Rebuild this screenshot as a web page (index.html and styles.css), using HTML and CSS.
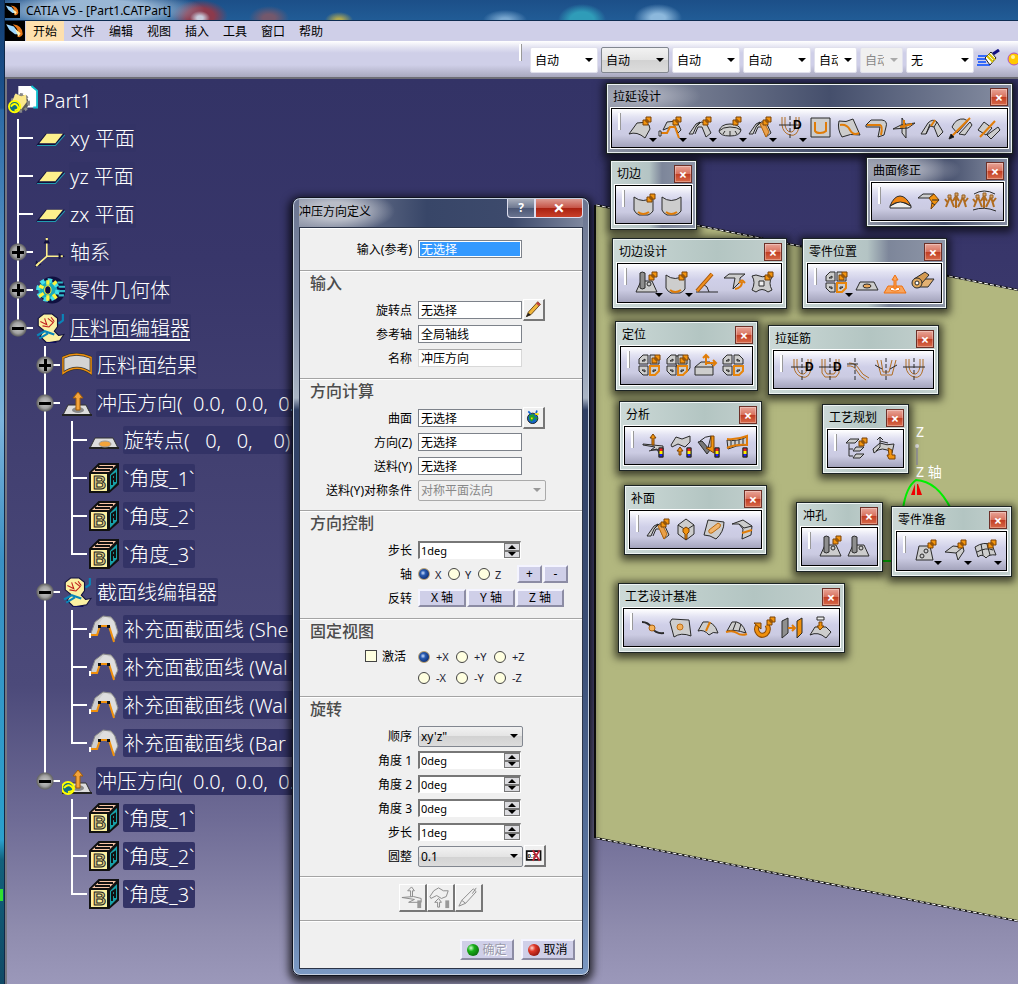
FILE: index.html
```html
<!DOCTYPE html>
<html lang="zh-CN">
<head>
  <meta charset="utf-8">
  <title>CATIA V5 - [Part1.CATPart]</title>
  <link rel="stylesheet" href="styles.css">
</head>

<body>
  <!-- icon library -->
  <svg class="library">
    <symbol id="logo" viewBox="0 0 18 18"><rect width="18" height="18" fill="#000"/><path d="M1 3L8 5L13 12L9 12L4 8Z" fill="#9fd8ff"/><path d="M7 3Q16 4 16 12Q14 16 11 14Q14 9 7 3Z" fill="#e8791a"/><path d="M9 7L14 11L12 14Z" fill="#fff1b0"/></symbol>
    <symbol id="brush" viewBox="0 0 24 20"><path d="M1 7H11M0 10H10M1 13H9M0 16H13" stroke="#0048ff" stroke-width="1.5"/><path d="M16 5L22 1" stroke="#101080" stroke-width="3"/><path d="M8 9L14 3L19 9L13 16Z" fill="#fff" stroke="#222"/><path d="M10 7L16 13M12 5L18 11" stroke="#d8c400" stroke-width="2"/></symbol>
    <symbol id="ball" viewBox="0 0 14 14"><circle cx="7" cy="7" r="6" fill="#ffc800" stroke="#b050c0"/><circle cx="6" cy="5" r="2" fill="#fff2a0"/></symbol>

    <!-- tree icons -->
    <symbol id="part" viewBox="0 0 32 32"><path d="M11 1H25L31 6V24H11Z" fill="#fff"/><path d="M25 1L31 6V24H27" fill="none" stroke="#10c0d0" stroke-width="2"/><circle cx="13" cy="19" r="9" fill="#5a5a58" stroke="#888" stroke-width="3" stroke-dasharray="3 3"/><path d="M5 16L8 9L14 12L19 10L20 18L14 26Z" fill="#fbe88a"/><circle cx="7" cy="23" r="6" fill="#107080" stroke="#ff0" stroke-width="2"/><path d="M3 23Q7 18 10 22T7 27" fill="none" stroke="#ff0" stroke-width="2"/></symbol>
    <symbol id="plane" viewBox="0 0 28 28"><path d="M1 21L10 10H28L19 21Z" fill="#10103c"/><path d="M4 19L11 10H26L19 19Z" fill="#fdf08c"/><path d="M2 21H19L28 11" fill="none" stroke="#209cb0"/></symbol>
    <symbol id="axes" viewBox="0 0 28 28"><path d="M11 4V18L3 25M11 18H25" fill="none" stroke="#fdf08c" stroke-width="1.5"/><path d="M11 0L8 6H14ZM28 18L22 15V21ZM0 28L1 22L6 26Z" fill="#10103c"/><path d="M10 2H12M24 18H26M1 27L4 24" stroke="#fdf08c" stroke-width="2"/></symbol>
    <symbol id="gear" viewBox="0 0 28 28"><circle cx="16" cy="14" r="11" fill="#101040" stroke="#101040" stroke-width="3"/><circle cx="12" cy="14" r="9" fill="#18aabd" stroke="#45e0e8" stroke-width="4" stroke-dasharray="4 3"/><path d="M12 5V9M12 19V24M4 10L8 12M4 20L8 17M17 9L20 6M17 18L20 22" stroke="#fdf43c" stroke-width="3"/><ellipse cx="12" cy="14" rx="3" ry="4" fill="#101040" stroke="#fdf43c"/><path d="M21 7H26M22 11H28M22 15H28M22 19H27" stroke="#30b8c8" stroke-width="2"/></symbol>
    <symbol id="editor" viewBox="0 0 28 28"><path d="M3 5L8 1H16L21 5V13L18 17L22 21L27 20L23 26L11 28L5 22L8 16L3 12Z" fill="#fbf0a2" stroke="#10103c"/><path d="M5 8L11 11L9 5M12 5L17 9L13 13L7 12M15 4L18 8" fill="none" stroke="#c02020"/><path d="M2 21L9 17L18 20M4 24L12 19M26 1V7L22 10" fill="none" stroke="#0a84b8" stroke-width="2"/><path d="M10 28H20" stroke="#101060" stroke-width="2"/></symbol>
    <symbol id="result" viewBox="0 0 32 28"><path d="M1 6Q15 -1 31 6V23Q16 12 1 23Z" fill="#d4d4d4" stroke="#333" stroke-width="3"/><path d="M1 23V6Q15 -1 31 6V23Q16 12 1 23Z" fill="none" stroke="#f0900c" stroke-width="1.5"/></symbol>
    <symbol id="punch" viewBox="0 0 30 28"><path d="M6 16H24L29 26H1Z" fill="#ddd" stroke="#333"/><path d="M0 26H30" stroke="#222" stroke-width="2"/><ellipse cx="16" cy="21" rx="6" ry="3" fill="#888"/><path d="M14 21V9H11L16 3L21 9H18V21Z" fill="#f3a43c" stroke="#a05a08"/></symbol>
    <symbol id="punch-update" viewBox="0 0 30 28"><use href="#punch"/><circle cx="6" cy="21" r="6" fill="#107080" stroke="#ff0" stroke-width="2"/><path d="M2 21Q6 16 10 20T6 25" fill="none" stroke="#ff0" stroke-width="2"/></symbol>
    <symbol id="plate" viewBox="0 0 30 28"><path d="M6 12H24L29 22H1Z" fill="#ddd" stroke="#333"/><path d="M0 22H30" stroke="#222" stroke-width="2"/><ellipse cx="16" cy="18" rx="6" ry="3" fill="#f3a43c" stroke="#999"/></symbol>
    <symbol id="cube" viewBox="0 0 30 30"><path d="M1 10L10 1H29V21L20 29H1Z" fill="#111" stroke="#111" stroke-width="2"/><path d="M3 9L11 2H27L20 9Z" fill="#f8c6a6"/><path d="M6 7H21M9 4H24" stroke="#111" stroke-width="2"/><path d="M21 12L28 5V20L21 27Z" fill="#18a0a8"/><path d="M23 22V13L26 11V19M23 17L26 15" fill="none" stroke="#111" stroke-width="2"/><rect x="2" y="11" width="16" height="17" fill="#fdf0a0"/><text x="4" y="26" class="cube-letter">B</text></symbol>
    <symbol id="fold" viewBox="0 0 30 30"><path d="M1 22L6 8L14 2L22 3L26 8L29 18L25 27L20 13L11 12L8 21Z" fill="#cfcfcf" stroke="#888"/><path d="M9 12Q12 5 16 3L24 6L28 18L25 24L19 12Z" fill="#dedede"/><path d="M2 21H8L11 12H20L25 28" fill="none" stroke="#f0900c" stroke-width="2"/><path d="M9 11H12V14H9ZM18 11H21V14H18Z" fill="#111"/><path d="M0 19H2V24H0Z" fill="#fff"/></symbol>

    <!-- toolbar icons -->
    <symbol id="dup" viewBox="0 0 26 26"><path class="o" d="M18 2H23V7H18ZM15 5H20V10H15Z"/></symbol>
    <symbol id="bar" viewBox="0 0 26 26"><rect x="18" y="15" width="4" height="9" fill="#22f"/><path stroke="none" fill="#e22" d="M18 15H22V18H18Z"/><path stroke="none" fill="#fe0" d="M18 18H22V21H18Z"/><path class="n" d="M18 15H22V24H18Z"/></symbol>
    <symbol id="sweep" viewBox="0 0 26 26"><path d="M1 19L9 8Q15 6 21 10L22 14L17 23Q9 16 1 19Z"/><use href="#dup"/></symbol>
    <symbol id="section" viewBox="0 0 26 26"><path d="M5 15L9 7L19 6L23 15L20 18L17 11L10 13Z"/><path class="ol" d="M3 18H9L12 12H17L21 23"/><path fill="#fff" d="M1 16H3V21H1Z"/><use href="#dup"/></symbol>
    <symbol id="wings" viewBox="0 0 26 26"><path d="M1 19L8 9L12 7L8 12L5 19ZM8 12L13 7L18 8L23 18L18 22L14 12L10 12L7 19"/><use href="#dup"/></symbol>
    <symbol id="bowl" viewBox="0 0 26 26"><path d="M1 16Q3 9 12 9T23 15Q22 21 12 21T1 16Z"/><path class="n" d="M1 16Q5 12 12 12T23 15M7 16L5 19M12 16V21M17 16L19 19"/><use href="#dup"/></symbol>
    <symbol id="wings-fill" viewBox="0 0 26 26"><path d="M1 19L8 9L12 7L8 12L5 19ZM8 12L13 7H18L23 18L18 22L14 12L10 12L7 19"/><path fill="#e9a04a" stroke="#b96a10" d="M12 9L16 7L21 17L18 22Z"/><use href="#dup"/></symbol>
    <symbol id="bead" viewBox="0 0 26 26"><path class="tan" d="M4 2V10Q5 18 12 20T21 12V2M7 2V10Q8 16 12 17T18 10V2"/><path class="n" stroke-dasharray="4 2" d="M12 1V24"/><path class="n" d="M1 10H23"/></symbol>
    <symbol id="bead-d" viewBox="0 0 26 26"><use href="#bead"/><text x="15" y="14" class="bead-letter">D</text></symbol>
    <symbol id="bead-flat-d" viewBox="0 0 26 26"><path class="tan" d="M4 2V16L7 20H18L21 16V2M7 2V14L9 17H16L18 14V2"/><path class="n" stroke-dasharray="4 2" d="M12 1V24"/><path class="n" d="M1 10H23"/><text x="15" y="14" class="bead-letter">D</text></symbol>
    <symbol id="bead-s" viewBox="0 0 26 26"><path class="tan" d="M3 6Q10 6 13 12T23 21M1 9Q8 8 11 14T20 23"/><path class="n" stroke-dasharray="4 2" d="M9 1V24"/><path class="n" d="M1 7H12"/></symbol>
    <symbol id="bead-v" viewBox="0 0 26 26"><path class="tan" d="M3 3L7 18H18L22 3M7 3L9 15H15L18 3"/><path class="n" stroke-dasharray="4 2" d="M12 1V24"/><path class="n" d="M1 8L8 12M23 8L16 12"/></symbol>
    <symbol id="pocket" viewBox="0 0 26 26"><path d="M3 3H22V22H3Z"/><path class="ol" d="M7 7V16Q8 18 12 18T18 16V7"/></symbol>
    <symbol id="patch-cut" viewBox="0 0 26 26"><path d="M3 6Q10 8 17 4L24 20Q14 18 6 22Q1 14 3 6Z"/><path class="ol" d="M4 10Q11 9 14 15T23 18"/></symbol>
    <symbol id="corner" viewBox="0 0 26 26"><path d="M2 10L7 5L18 5Q24 6 22 12L20 20L14 22L16 12H2Z"/><path class="ol" d="M3 10H16Q19 11 17 20"/></symbol>
    <symbol id="cross" viewBox="0 0 26 26"><path d="M1 14L9 10L23 8L16 13L1 14ZM10 3L14 10V23L10 18Z"/><path class="ol" d="M8 12L20 9M12 5V13"/></symbol>
    <symbol id="wings-mid" viewBox="0 0 26 26"><path d="M1 19L8 8Q13 3 17 7L23 17L18 22L14 12L10 11L6 19Z"/><path class="n" d="M6 19L10 9M14 12L17 7"/><path class="ol" d="M11 11L15 5"/></symbol>
    <symbol id="split" viewBox="0 0 26 26"><path d="M4 12Q8 3 16 4L20 6L9 18ZM11 19L22 7L24 10L17 20Z"/><path class="ol" d="M3 22L22 3"/><path fill="#111" d="M1 24L3 19L6 22Z"/></symbol>
    <symbol id="split-two" viewBox="0 0 26 26"><path d="M2 15L8 7L16 13L10 20ZM11 20L22 12L24 15L15 24Z"/><path class="ol" d="M4 22L19 6"/></symbol>
    <symbol id="trim" viewBox="0 0 26 26"><path d="M2 5Q11 12 21 5V19Q19 22 16 23H7Q3 21 2 18Z"/><path class="ol" d="M6 20Q11 24 17 20"/></symbol>
    <symbol id="trim-new" viewBox="0 0 26 26"><use href="#trim"/><use href="#dup"/></symbol>
    <symbol id="dome" viewBox="0 0 26 26"><path fill="#eee" d="M2 17V19H23V17L12 12Z"/><path fill="#ee8412" d="M2 17Q6 7 12 7T23 17Q12 9 2 17Z"/></symbol>
    <symbol id="fan" viewBox="0 0 26 26"><path d="M2 9L7 5H18L13 9Z"/><path class="o" d="M13 9L18 5L23 11L15 20L16 13Z"/><path class="n" d="M16 11L23 11M16 14L19 16"/></symbol>
    <symbol id="points" viewBox="0 0 26 26"><path class="tan" stroke-width="2" d="M2 18L6 8L10 18M4 14L1 10M12 19V7M9 12L12 7L15 12M14 18L19 8L22 18M20 14L24 9"/><path fill="#d9a264" stroke="#96652a" d="M4 6H7V9H4ZM11 4H14V7H11ZM18 6H21V9H18Z"/></symbol>
    <symbol id="points-arc" viewBox="0 0 26 26"><use href="#points"/><path class="n" d="M2 5Q12 -1 23 5M1 21Q12 17 24 22"/></symbol>
    <symbol id="cylinder" viewBox="0 0 26 26"><path d="M2 22L7 11H18L23 22Z"/><path d="M6 3Q8 1 11 3V18Q8 20 6 18Z" fill="#8e8e8e"/><circle cx="15" cy="14" r="2"/></symbol>
    <symbol id="cylinder-new" viewBox="0 0 26 26"><use href="#cylinder"/><use href="#dup"/></symbol>
    <symbol id="angle" viewBox="0 0 26 26"><path class="n" d="M2 22H24M9 14Q14 16 15 22"/><path stroke="#a35408" stroke-width="4" d="M3 21L18 4"/><path stroke="#f09020" stroke-width="2" d="M3 21L18 4"/></symbol>
    <symbol id="bend" viewBox="0 0 26 26"><path d="M2 8L7 4H23L18 8V12L11 19L13 8Z"/><path class="ol" d="M13 19Q20 18 20 12M20 10L17 13M20 10L23 13"/></symbol>
    <symbol id="link" viewBox="0 0 26 26"><path d="M2 6L6 5Q12 8 19 6L22 7Q18 13 22 20L18 22Q12 17 6 22L2 20Q6 12 2 6Z"/><path fill="#eee" d="M9 11H14V16H9Z"/><use href="#dup"/></symbol>
    <symbol id="quad" viewBox="0 0 26 26"><path d="M2 6L6 2H11V11H2ZM13 2H18L22 6V11H13ZM2 13H11V22H6L2 18Z"/><path stroke="#e8860c" stroke-width="2" d="M13 13H22V18L18 22H13Z"/><path class="n" d="M5 8H8V6ZM16 6V8H19ZM5 17H8V19ZM16 17H19L16 19Z"/></symbol>
    <symbol id="quad-new" viewBox="0 0 26 26"><use href="#quad"/><use href="#dup"/></symbol>
    <symbol id="quad-double" viewBox="0 0 26 26"><path d="M8 3H22L25 7V15L22 19H14Z"/><use href="#quad"/><use href="#dup"/></symbol>
    <symbol id="tray" viewBox="0 0 26 26"><path d="M6 12H20L24 20H2Z"/><ellipse cx="13" cy="16" rx="4" ry="2" fill="#eda95a"/></symbol>
    <symbol id="punch-orange" viewBox="0 0 26 26"><path fill="#f9a45c" stroke="#f0700c" d="M6 16H20L24 23H2Z"/><ellipse cx="13" cy="19" rx="5" ry="2" fill="#fff" stroke="#f0700c"/><path fill="#f9a45c" stroke="#f0700c" d="M12 19V10H10L13 5L16 10H14V19Z"/></symbol>
    <symbol id="roll" viewBox="0 0 26 26"><path fill="#e3b172" d="M4 16L12 9H24L18 17H9Z"/><path fill="#d49a52" d="M4 9L15 2L19 5L12 13Z"/><circle cx="7" cy="13" r="5" fill="#e0a95f"/><circle cx="7" cy="13" r="2" fill="#fff"/></symbol>
    <symbol id="box-move" viewBox="0 0 26 26"><path d="M2 14L8 9H17L20 13V22H2Z"/><path class="n" d="M2 14H20"/><path class="ol" d="M13 12V2M10 5L13 2L16 5M13 10H23M20 7L23 10L20 13"/></symbol>
    <symbol id="sheet-up" viewBox="0 0 26 26"><path d="M2 11L22 13V17H10L14 14L2 12Z"/><path class="o" d="M11 12V5H9L12 1L15 5H13V12Z"/><path class="n" d="M8 18L16 16L18 20"/><use href="#bar"/></symbol>
    <symbol id="surf-up" viewBox="0 0 26 26"><path d="M2 12L7 4L13 6L21 3V9L16 14L9 11L3 14Z"/><path class="o" d="M10 22V18H8L11 14L14 18H12V22Z"/><use href="#bar"/></symbol>
    <symbol id="draft" viewBox="0 0 26 26"><path d="M1 9L5 8L13 17L10 21Z" fill="#777"/><path class="n" d="M3 8Q8 3 14 3L11 15"/><path class="o" d="M14 3H17V20L9 15L14 14Z"/><use href="#bar"/></symbol>
    <symbol id="strip" viewBox="0 0 26 26"><path d="M2 7Q11 9 22 4V12Q11 12 3 16Z"/><path class="n" d="M6 8V14M10 8V13M14 7V12M18 6V12"/><path class="ol" d="M2 6Q12 7 22 3V12Q11 11 2 15"/><use href="#bar"/></symbol>
    <symbol id="steps" viewBox="0 0 26 26"><path d="M2 7L6 3H15L11 7ZM9 15L12 11H20L16 15ZM9 22L12 18H20L16 22Z"/><path class="n" d="M5 8V20H9M5 13H9"/><use href="#dup"/></symbol>
    <symbol id="warp" viewBox="0 0 26 26"><path d="M1 13L8 7Q15 10 22 8L20 17Q10 9 2 17Z"/><path class="n" d="M8 2V11L4 15M5 4L8 1L11 4M8 5L16 7"/><path class="o" d="M16 12L20 14V19H23V23H17L15 19H17Z"/></symbol>
    <symbol id="hexbox" viewBox="0 0 26 26"><path d="M12 2L20 8V17L12 23L4 17V8Z"/><path class="n" d="M4 8L12 13L20 8M12 13V23"/><path class="o" d="M9 12L12 10L15 12V15L13 17V22H11V17L9 15Z"/></symbol>
    <symbol id="slot" viewBox="0 0 26 26"><path d="M6 3L22 5Q22 15 14 22Q8 18 2 18Z"/><path fill="#f1b56c" stroke="#b96a10" d="M7 13L16 6Q20 7 18 10L10 16Q6 17 7 13Z"/></symbol>
    <symbol id="flange" viewBox="0 0 26 26"><path d="M2 7L13 3L22 9L21 18L12 22L13 12L9 7Z"/><path class="n" d="M9 7L14 11L22 9"/><path class="ol" d="M12 16L22 13"/></symbol>
    <symbol id="plate-holes" viewBox="0 0 26 26"><path d="M6 8H17L20 22H3Z"/><circle cx="13" cy="13" r="2"/><circle cx="9" cy="18" r="2"/><use href="#dup"/></symbol>
    <symbol id="flange-new" viewBox="0 0 26 26"><path d="M2 14L10 8L20 9L21 13L15 22L13 15Z"/><path class="n" d="M13 15L20 9"/><use href="#dup"/></symbol>
    <symbol id="mesh" viewBox="0 0 26 26"><path d="M2 9Q11 3 19 7L23 17Q16 16 13 20Q9 15 5 19Z"/><path class="n" d="M4 14Q13 9 20 12M8 6L10 17M14 6L17 17"/><use href="#dup"/></symbol>
    <symbol id="curve-point" viewBox="0 0 26 26"><path class="n" stroke-width="2" d="M2 7Q8 7 12 13T24 18"/><circle cx="12" cy="13" r="3" fill="#f6b35c" stroke="#a86010"/></symbol>
    <symbol id="patch-point" viewBox="0 0 26 26"><path d="M4 4L21 5L23 21Q13 17 6 22L2 7Z"/><circle cx="12" cy="12" r="3" fill="#f3b15c" stroke="#c07018"/></symbol>
    <symbol id="patch-mid" viewBox="0 0 26 26"><path d="M2 16L7 7Q18 5 22 18Q17 16 13 20Q8 14 2 16Z"/><path class="ol" d="M10 16L14 7"/></symbol>
    <symbol id="patch-edge" viewBox="0 0 26 26"><path d="M3 16L8 7Q18 5 22 18Q10 14 3 16Z"/><path class="n" d="M12 7L9 15M17 9L15 16"/><path class="ol" d="M2 17Q9 15 13 18T23 19"/></symbol>
    <symbol id="rotate" viewBox="0 0 26 26"><path stroke="#8a4a06" stroke-width="5" fill="none" d="M6 10Q3 14 6 18T14 19Q18 15 15 10"/><path stroke="#f0900c" stroke-width="3" fill="none" d="M6 10Q3 14 6 18T14 19Q18 15 15 10"/><path class="o" d="M2 8H9V14Z"/><use href="#dup"/></symbol>
    <symbol id="doors" viewBox="0 0 26 26"><path fill="#8f8f8f" d="M2 6L8 3V18L2 23Z"/><path fill="#f0900c" d="M17 6L22 3V18L17 23Z"/><path class="ol" d="M8 13H15M12 10L15 13L12 16"/></symbol>
    <symbol id="project" viewBox="0 0 26 26"><path d="M2 20L7 12H18L23 17L18 23Q10 16 2 20Z"/><path d="M9 2H16V5H9Z" fill="#eee"/><path class="o" d="M11 7H14V11H16L12 15L9 11H11Z"/></symbol>
    <symbol id="pencil" viewBox="0 0 22 22"><path d="M3 19L5 14L16 2L19 5L8 17Z" fill="#f0b53a" stroke="#5a3a10"/><path d="M14 4L16 2L19 5L17 7Z" fill="#c04040"/><path d="M2 20L5 15L8 17Z" fill="#222"/></symbol>
    <symbol id="pencil-off" viewBox="0 0 26 26"><path fill="none" stroke="#8a8a8a" d="M3 22L6 16L18 4L21 7L10 19ZM6 16L10 19M17 9L21 3"/></symbol>
    <symbol id="globe" viewBox="0 0 22 22"><circle cx="10" cy="12" r="6" fill="#1464c8" stroke="#111"/><path d="M6 8L11 7L13 11L9 16L6 13ZM13 10L16 11L14 15Z" fill="#22a02c"/><path d="M5 4L8 7M14 6L15 3" stroke="#1060d0" stroke-width="2"/><path d="M13 7H17M8 12H10" stroke="#ffe000" stroke-width="2"/></symbol>
    <symbol id="round-off" viewBox="0 0 22 22"><path d="M2 6H18V16H2Z" fill="#fff" stroke="#111" stroke-width="2"/><text x="3" y="14" class="round-letter">0.7</text><path d="M9 5L17 17M17 5L9 17" stroke="#c02838" stroke-width="2"/></symbol>
    <symbol id="sheet-up-off" viewBox="0 0 26 26"><path fill="none" stroke="#8a8a8a" d="M2 13L14 12L22 14V18H9L15 15ZM11 12V6H8L12 2L15 6H13V12"/><path fill="#999" d="M18 16H22V24H18Z"/></symbol>
    <symbol id="surf-up-off" viewBox="0 0 26 26"><path fill="none" stroke="#8a8a8a" d="M2 12L6 6L11 3L16 6L21 6L19 12L14 14L9 11L3 14ZM10 23V18H7L11 14L14 18H12V23Z"/><path fill="#999" d="M18 16H22V24H18Z"/></symbol>
  </svg>

  <div class="desktop-edge"></div>

  <div class="app">
    <header class="titlebar">
      <svg class="logo"><use href="#logo"/></svg>
      <span>CATIA V5 - [Part1.CATPart]</span>
    </header>

    <nav class="menubar">
      <svg class="logo"><use href="#logo"/></svg>
      <button class="active">开始</button>
      <button>文件</button>
      <button>编辑</button>
      <button>视图</button>
      <button>插入</button>
      <button>工具</button>
      <button>窗口</button>
      <button>帮助</button>
    </nav>

    <div class="toolbar">
      <span class="grip"></span>
      <select aria-label="颜色"><option>自动</option></select>
      <select aria-label="透明度" class="raised"><option>自动</option></select>
      <select aria-label="线宽"><option>自动</option></select>
      <select aria-label="线型"><option>自动</option></select>
      <select aria-label="点" class="narrow"><option>自动</option></select>
      <select aria-label="渲染" class="narrow" disabled><option>自动</option></select>
      <select aria-label="图层"><option>无</option></select>
      <button class="paint" aria-label="画笔"><svg><use href="#brush"/></svg></button>
      <button class="material" aria-label="材料"><svg><use href="#ball"/></svg></button>
    </div>

    <main class="viewport">
      <svg class="scene">
        <polygon points="589,126 3011,614 3011,1235 589,759" fill="#b2b77f"/>
        <path class="edge-dark" d="M589 126L3011 614M589 759L3011 1235M588 126V759"/>
        <path class="edge-light" d="M589 126L3011 614M589 759L3011 1235"/>
        <path d="M910 368V386" stroke="#9a9a96" stroke-width="2"/>
        <circle cx="910" cy="367" r="2" fill="#ddd"/>
        <path d="M896 430Q899 408 909 401Q930 402 944 430M876 482H884" fill="none" stroke="#00f000" stroke-width="2"/>
        <path d="M908 405L904 416H908ZM910 405H911L915 416H910Z" fill="#f00000"/>
        <text x="909" y="358">Z</text>
        <text x="909" y="398">Z 轴</text>
      </svg>

      <ul class="tree">
        <li class="root">
          <div class="node"><svg><use href="#part"/></svg><span class="label">Part1</span></div>
          <ul>
            <li><div class="node"><i class="dash"></i><svg><use href="#plane"/></svg><span class="label">xy 平面</span></div></li>
            <li><div class="node"><i class="dash"></i><svg><use href="#plane"/></svg><span class="label">yz 平面</span></div></li>
            <li><div class="node"><i class="dash"></i><svg><use href="#plane"/></svg><span class="label">zx 平面</span></div></li>
            <li><div class="node"><i class="dash plus"></i><svg><use href="#axes"/></svg><span class="label">轴系</span></div></li>
            <li><div class="node"><i class="dash plus"></i><svg><use href="#gear"/></svg><span class="label">零件几何体</span></div></li>
            <li>
              <div class="node"><i class="dash minus"></i><svg><use href="#editor"/></svg><span class="label current">压料面编辑器</span></div>
              <ul>
                <li><div class="node"><i class="dash plus"></i><svg><use href="#result"/></svg><span class="label">压料面结果</span></div></li>
                <li>
                  <div class="node"><i class="dash minus"></i><svg><use href="#punch"/></svg><span class="label long">冲压方向(  0.0,  0.0,  0.0)</span></div>
                  <ul>
                    <li><div class="node"><i class="dash"></i><svg><use href="#plate"/></svg><span class="label long">旋转点(   0,   0,    0)</span></div></li>
                    <li><div class="node"><i class="dash"></i><svg><use href="#cube"/></svg><span class="label">`角度_1`</span></div></li>
                    <li><div class="node"><i class="dash"></i><svg><use href="#cube"/></svg><span class="label">`角度_2`</span></div></li>
                    <li><div class="node"><i class="dash"></i><svg><use href="#cube"/></svg><span class="label">`角度_3`</span></div></li>
                  </ul>
                </li>
                <li>
                  <div class="node"><i class="dash minus"></i><svg><use href="#editor"/></svg><span class="label">截面线编辑器</span></div>
                  <ul>
                    <li><div class="node"><i class="dash"></i><svg><use href="#fold"/></svg><span class="label long">补充面截面线 (She</span></div></li>
                    <li><div class="node"><i class="dash"></i><svg><use href="#fold"/></svg><span class="label long">补充面截面线 (Wal</span></div></li>
                    <li><div class="node"><i class="dash"></i><svg><use href="#fold"/></svg><span class="label long">补充面截面线 (Wal</span></div></li>
                    <li><div class="node"><i class="dash"></i><svg><use href="#fold"/></svg><span class="label long">补充面截面线 (Bar</span></div></li>
                  </ul>
                </li>
                <li>
                  <div class="node"><i class="dash minus"></i><svg><use href="#punch-update"/></svg><span class="label long">冲压方向(  0.0,  0.0,  0.0)</span></div>
                  <ul>
                    <li><div class="node"><i class="dash"></i><svg><use href="#cube"/></svg><span class="label">`角度_1`</span></div></li>
                    <li><div class="node"><i class="dash"></i><svg><use href="#cube"/></svg><span class="label">`角度_2`</span></div></li>
                    <li><div class="node"><i class="dash"></i><svg><use href="#cube"/></svg><span class="label">`角度_3`</span></div></li>
                  </ul>
                </li>
              </ul>
            </li>
          </ul>
        </li>
      </ul>

      <form class="dialog">
        <header class="dialog-title">
          <span>冲压方向定义</span>
          <button type="button" class="help">?</button>
          <button type="button" class="quit">×</button>
        </header>
        <div class="dialog-body">
          <section class="intro">
            <div class="row"><label class="name" for="reference">输入(参考)</label><input type="text" id="reference" class="selected" value="无选择"></div>
          </section>

          <section>
            <h2>输入</h2>
            <div class="row"><label class="name" for="pivot">旋转点</label><input type="text" id="pivot" value="无选择"><button type="button" class="icon-btn" aria-label="编辑"><svg><use href="#pencil"/></svg></button></div>
            <div class="row"><label class="name" for="ref-axis">参考轴</label><input type="text" id="ref-axis" value="全局轴线"></div>
            <div class="row"><label class="name" for="dir-name">名称</label><input type="text" id="dir-name" class="plain" value="冲压方向"></div>
          </section>

          <section>
            <h2>方向计算</h2>
            <div class="row"><label class="name" for="surface">曲面</label><input type="text" id="surface" value="无选择"><button type="button" class="icon-btn" aria-label="曲面选择"><svg><use href="#globe"/></svg></button></div>
            <div class="row"><label class="name" for="dir-z">方向(Z)</label><input type="text" id="dir-z" value="无选择"></div>
            <div class="row"><label class="name" for="feed-y">送料(Y)</label><input type="text" id="feed-y" value="无选择"></div>
            <div class="row"><label class="name" for="symmetry">送料(Y)对称条件</label><select id="symmetry" class="wide" disabled><option>对称平面法向</option></select></div>
          </section>

          <section>
            <h2>方向控制</h2>
            <div class="row"><label class="name" for="step">步长</label><span class="spin"><input type="text" id="step" value="1deg"><span class="arrows"><button type="button" class="up"></button><button type="button" class="down"></button></span></span></div>
            <div class="row">
              <span class="name">轴</span>
              <label class="pick"><input type="radio" name="axis" checked>X</label>
              <label class="pick"><input type="radio" name="axis">Y</label>
              <label class="pick"><input type="radio" name="axis">Z</label>
              <span class="signs"><button type="button" class="push">+</button><button type="button" class="push">-</button></span>
            </div>
            <div class="row">
              <span class="name">反转</span>
              <span class="flips"><button type="button" class="push">X 轴</button><button type="button" class="push">Y 轴</button><button type="button" class="push">Z 轴</button></span>
            </div>
          </section>

          <section>
            <h2>固定视图</h2>
            <div class="row tight">
              <span class="name"><label class="check"><input type="checkbox">激活</label></span>
              <label class="pick far"><input type="radio" name="view" checked>+X</label>
              <label class="pick far"><input type="radio" name="view">+Y</label>
              <label class="pick far"><input type="radio" name="view">+Z</label>
            </div>
            <div class="row tight">
              <span class="name"></span>
              <label class="pick far"><input type="radio" name="view">-X</label>
              <label class="pick far"><input type="radio" name="view">-Y</label>
              <label class="pick far"><input type="radio" name="view">-Z</label>
            </div>
          </section>

          <section>
            <h2>旋转</h2>
            <div class="row"><label class="name" for="order">顺序</label><select id="order"><option>xy'z"</option></select></div>
            <div class="row"><label class="name" for="angle1">角度 1</label><span class="spin"><input type="text" id="angle1" value="0deg"><span class="arrows"><button type="button" class="up"></button><button type="button" class="down"></button></span></span></div>
            <div class="row"><label class="name" for="angle2">角度 2</label><span class="spin"><input type="text" id="angle2" value="0deg"><span class="arrows"><button type="button" class="up"></button><button type="button" class="down"></button></span></span></div>
            <div class="row"><label class="name" for="angle3">角度 3</label><span class="spin"><input type="text" id="angle3" value="0deg"><span class="arrows"><button type="button" class="up"></button><button type="button" class="down"></button></span></span></div>
            <div class="row"><label class="name" for="turn-step">步长</label><span class="spin"><input type="text" id="turn-step" value="1deg"><span class="arrows"><button type="button" class="up"></button><button type="button" class="down"></button></span></span></div>
            <div class="row"><label class="name" for="rounding">圆整</label><select id="rounding"><option>0.1</option></select><button type="button" class="icon-btn" aria-label="取消圆整"><svg><use href="#round-off"/></svg></button></div>
          </section>

          <section class="actions">
            <button type="button" class="icon-btn big" disabled><svg><use href="#sheet-up-off"/></svg></button>
            <button type="button" class="icon-btn big" disabled><svg><use href="#surf-up-off"/></svg></button>
            <button type="button" class="icon-btn big" disabled><svg><use href="#pencil-off"/></svg></button>
          </section>

          <section class="footer">
            <button type="button" class="push ok" disabled><i class="lamp"></i>确定</button>
            <button type="button" class="push cancel"><i class="lamp red"></i>取消</button>
          </section>
        </div>
      </form>

      <div class="palette dark p-draw">
        <div class="palette-title"><span>拉延设计</span><button class="close">×</button></div>
        <div class="tools more-tools">
          <span class="grip"></span>
          <button class="tool more"><svg><use href="#sweep"/></svg></button>
          <button class="tool more"><svg><use href="#section"/></svg></button>
          <button class="tool more"><svg><use href="#wings"/></svg></button>
          <button class="tool more"><svg><use href="#bowl"/></svg></button>
          <button class="tool more"><svg><use href="#wings-fill"/></svg></button>
          <button class="tool more"><svg><use href="#bead-d"/></svg></button>
          <button class="tool"><svg><use href="#pocket"/></svg></button>
          <button class="tool"><svg><use href="#patch-cut"/></svg></button>
          <button class="tool"><svg><use href="#corner"/></svg></button>
          <button class="tool"><svg><use href="#cross"/></svg></button>
          <button class="tool"><svg><use href="#wings-mid"/></svg></button>
          <button class="tool"><svg><use href="#split"/></svg></button>
          <button class="tool"><svg><use href="#split-two"/></svg></button>
        </div>
      </div>

      <div class="palette mixed p-trim">
        <div class="palette-title"><span>切边</span><button class="close">×</button></div>
        <div class="tools">
          <span class="grip"></span>
          <button class="tool"><svg><use href="#trim-new"/></svg></button>
          <button class="tool"><svg><use href="#trim"/></svg></button>
        </div>
      </div>

      <div class="palette dark p-fix">
        <div class="palette-title"><span>曲面修正</span><button class="close">×</button></div>
        <div class="tools">
          <span class="grip"></span>
          <button class="tool"><svg><use href="#dome"/></svg></button>
          <button class="tool"><svg><use href="#fan"/></svg></button>
          <button class="tool"><svg><use href="#points"/></svg></button>
          <button class="tool"><svg><use href="#points-arc"/></svg></button>
        </div>
      </div>

      <div class="palette p-trim-design">
        <div class="palette-title"><span>切边设计</span><button class="close">×</button></div>
        <div class="tools more-tools">
          <span class="grip"></span>
          <button class="tool more"><svg><use href="#cylinder-new"/></svg></button>
          <button class="tool more"><svg><use href="#trim-new"/></svg></button>
          <button class="tool"><svg><use href="#angle"/></svg></button>
          <button class="tool"><svg><use href="#bend"/></svg></button>
          <button class="tool"><svg><use href="#link"/></svg></button>
        </div>
      </div>

      <div class="palette mixed p-place">
        <div class="palette-title"><span>零件位置</span><button class="close">×</button></div>
        <div class="tools more-tools">
          <span class="grip"></span>
          <button class="tool more"><svg><use href="#quad-new"/></svg></button>
          <button class="tool"><svg><use href="#tray"/></svg></button>
          <button class="tool"><svg><use href="#punch-orange"/></svg></button>
          <button class="tool"><svg><use href="#roll"/></svg></button>
        </div>
      </div>

      <div class="palette p-locate">
        <div class="palette-title"><span>定位</span><button class="close">×</button></div>
        <div class="tools">
          <span class="grip"></span>
          <button class="tool"><svg><use href="#quad-new"/></svg></button>
          <button class="tool"><svg><use href="#quad-double"/></svg></button>
          <button class="tool"><svg><use href="#box-move"/></svg></button>
          <button class="tool"><svg><use href="#quad"/></svg></button>
        </div>
      </div>

      <div class="palette p-bead">
        <div class="palette-title"><span>拉延筋</span><button class="close">×</button></div>
        <div class="tools">
          <span class="grip"></span>
          <button class="tool"><svg><use href="#bead-d"/></svg></button>
          <button class="tool"><svg><use href="#bead-flat-d"/></svg></button>
          <button class="tool"><svg><use href="#bead-s"/></svg></button>
          <button class="tool"><svg><use href="#bead-v"/></svg></button>
          <button class="tool"><svg><use href="#bead"/></svg></button>
        </div>
      </div>

      <div class="palette p-analyse">
        <div class="palette-title"><span>分析</span><button class="close">×</button></div>
        <div class="tools">
          <span class="grip"></span>
          <button class="tool"><svg><use href="#sheet-up"/></svg></button>
          <button class="tool"><svg><use href="#surf-up"/></svg></button>
          <button class="tool"><svg><use href="#draft"/></svg></button>
          <button class="tool"><svg><use href="#strip"/></svg></button>
        </div>
      </div>

      <div class="palette p-plan">
        <div class="palette-title"><span>工艺规划</span><button class="close">×</button></div>
        <div class="tools">
          <span class="grip"></span>
          <button class="tool"><svg><use href="#steps"/></svg></button>
          <button class="tool"><svg><use href="#warp"/></svg></button>
        </div>
      </div>

      <div class="palette p-fill">
        <div class="palette-title"><span>补面</span><button class="close">×</button></div>
        <div class="tools">
          <span class="grip"></span>
          <button class="tool"><svg><use href="#wings-fill"/></svg></button>
          <button class="tool"><svg><use href="#hexbox"/></svg></button>
          <button class="tool"><svg><use href="#slot"/></svg></button>
          <button class="tool"><svg><use href="#flange"/></svg></button>
        </div>
      </div>

      <div class="palette p-pierce">
        <div class="palette-title"><span>冲孔</span><button class="close">×</button></div>
        <div class="tools">
          <span class="grip"></span>
          <button class="tool"><svg><use href="#cylinder-new"/></svg></button>
          <button class="tool"><svg><use href="#cylinder"/></svg></button>
        </div>
      </div>

      <div class="palette p-prepare">
        <div class="palette-title"><span>零件准备</span><button class="close">×</button></div>
        <div class="tools more-tools">
          <span class="grip"></span>
          <button class="tool more"><svg><use href="#plate-holes"/></svg></button>
          <button class="tool more"><svg><use href="#flange-new"/></svg></button>
          <button class="tool more"><svg><use href="#mesh"/></svg></button>
        </div>
      </div>

      <div class="palette p-datum">
        <div class="palette-title"><span>工艺设计基准</span><button class="close">×</button></div>
        <div class="tools">
          <span class="grip"></span>
          <button class="tool"><svg><use href="#curve-point"/></svg></button>
          <button class="tool"><svg><use href="#patch-point"/></svg></button>
          <button class="tool"><svg><use href="#patch-mid"/></svg></button>
          <button class="tool"><svg><use href="#patch-edge"/></svg></button>
          <button class="tool"><svg><use href="#rotate"/></svg></button>
          <button class="tool"><svg><use href="#doors"/></svg></button>
          <button class="tool"><svg><use href="#project"/></svg></button>
        </div>
      </div>
    </main>
  </div>
</body>
</html>
```
FILE: styles.css
```css
* {
  box-sizing: border-box;
}

body {
  margin: 0;
  height: 100vh;
  display: flex;
  overflow: hidden;
  background: #cfcfe6;
  font-family: "Noto Sans", "Noto Sans CJK SC", sans-serif;
  font-size: 12px;
  color: #000;
}

button,
input,
select {
  font: inherit;
  color: inherit;
  margin: 0;
}

button {
  padding: 0;
  border: none;
  background: none;
}

.library {
  display: none;
}

.desktop-edge {
  width: 5px;
  flex: none;
  border-right: 1px solid #102848;
  background:
    linear-gradient(#30e030, #30e030) 0 889px / 3px 12px no-repeat,
    linear-gradient(#123c6e 0, #1d5592 108px, #2c6aa6 110px, #4e8cc0 240px, #7db4dc 420px, #3a90c4 560px, #2aa0cc 840px, #12617c 860px, #104a66 100%);
}

.app {
  flex: 1;
  min-width: 0;
  display: flex;
  flex-direction: column;
}

/* title + menu */
.titlebar {
  height: 20px;
  display: flex;
  align-items: center;
  gap: 6px;
  background:
    radial-gradient(ellipse 110px 20px at 90px 10px, rgba(160, 188, 216, .95) 50%, rgba(130, 165, 205, 0)),
    radial-gradient(ellipse 10px 7px at 195px 18px, #c8ccdc 30%, rgba(190, 190, 210, 0)),
    radial-gradient(ellipse 28px 16px at 195px 16px, #8c3a4c 50%, rgba(140, 58, 76, 0)),
    radial-gradient(ellipse 20px 12px at 264px 18px, #74586c 30%, rgba(110, 80, 110, 0)),
    radial-gradient(ellipse 14px 8px at 334px 20px, #b0a850 20%, rgba(120, 120, 60, 0)),
    radial-gradient(ellipse 22px 10px at 500px 20px, #7aa8d0 20%, rgba(100, 150, 200, 0)),
    radial-gradient(ellipse 24px 16px at 577px 20px, #2f9cb8 50%, rgba(40, 140, 180, 0)),
    radial-gradient(ellipse 24px 14px at 653px 18px, #8cb8dc 30%, rgba(120, 170, 220, 0)),
    linear-gradient(#1c4f88, #215c96);
}

.titlebar .logo {
  width: 15px;
  height: 15px;
}

.menubar {
  height: 21px;
  display: flex;
  border-top: 1px solid #0e2d52;
  background: #cfcfe8;
}

.menubar .logo {
  width: 20px;
  height: 20px;
  margin-right: 1px;
}

.menubar button {
  padding: 0 7px;
}

.menubar .active {
  background: #fee0ae;
}

/* graphic properties */
.toolbar {
  height: 38px;
  flex: none;
  display: flex;
  align-items: center;
  justify-content: flex-end;
  gap: 3px;
  border-bottom: 2px solid #6e6e76;
  background: linear-gradient(#fff 0, #e4e4f2 6px, #cfcfe8 12px, #cfcfe8 24px, #a8a8be 100%);
}

.grip {
  width: 3px;
  height: 17px;
  border-right: 1px solid #999;
  background: #fff;
}

.toolbar .grip {
  align-self: flex-start;
  margin-top: 3px;
  margin-right: 5px;
}

select {
  appearance: none;
  padding: 0 18px 0 4px;
  border: 1px solid #828790;
  border-radius: 2px;
  background:
    url("data:image/svg+xml,%3Csvg xmlns='http://www.w3.org/2000/svg' width='8' height='4'%3E%3Cpath d='M0 0H8L4 4Z'/%3E%3C/svg%3E") right 4px center no-repeat,
    linear-gradient(#f2f2f2, #e4e4e4 50%, #d2d2d2 50%, #dcdcdc);
}

select:disabled {
  color: #888;
  opacity: 1;
  border-color: #aaa;
  background:
    url("data:image/svg+xml,%3Csvg xmlns='http://www.w3.org/2000/svg' width='8' height='4'%3E%3Cpath d='M0 0H8L4 4Z' fill='%23999'/%3E%3C/svg%3E") right 4px center no-repeat,
    #f0f0f0;
}

.toolbar select {
  flex: none;
  width: 68px;
  height: 26px;
  margin-top: 2px;
}

.toolbar select:not(.raised) {
  border-color: #e0e0ec;
  background-color: #fff;
  background-image: url("data:image/svg+xml,%3Csvg xmlns='http://www.w3.org/2000/svg' width='8' height='4'%3E%3Cpath d='M0 0H8L4 4Z'/%3E%3C/svg%3E");
}

.toolbar select.narrow {
  width: 43px;
}

.toolbar select.narrow:disabled {
  background-color: #f0f0f0;
  background-image: url("data:image/svg+xml,%3Csvg xmlns='http://www.w3.org/2000/svg' width='8' height='4'%3E%3Cpath d='M0 0H8L4 4Z' fill='%23aaa'/%3E%3C/svg%3E");
}

.paint,
.paint svg {
  width: 24px;
  height: 20px;
}

.material {
  width: 14px;
  height: 14px;
  padding-left: 3px;
  overflow: hidden;
}

.material svg {
  width: 14px;
  height: 14px;
}

.paint svg,
.material svg,
.tool svg,
.icon-btn svg {
  display: block;
}

/* 3D view */
.viewport {
  position: relative;
  flex: 1;
  min-height: 0;
  overflow: hidden;
  border-left: 2px solid #77777f;
  background: linear-gradient(#333366 0, #38366a 20%, #424071 42%, #4c4a7a 67%, #6f6c96 82%, #8f8cae 94%, #9b98ba 100%);
}

.scene {
  position: absolute;
  left: 0;
  top: 0;
  width: 100%;
  height: 100%;
}

.scene text {
  fill: #fff;
  font-size: 14px;
}

.edge-dark {
  fill: none;
  stroke: #111;
  stroke-width: 2;
}

.edge-light {
  fill: none;
  stroke: #fff;
  stroke-dasharray: 4 2;
}

/* specification tree */
.tree,
.tree ul {
  list-style: none;
  margin: 0;
  padding: 0;
}

.tree {
  position: relative;
  width: 340px;
  padding-top: 2px;
  font-size: 20px;
  font-weight: 300;
  color: #fff;
}

.tree li {
  margin-left: 27px;
  background: linear-gradient(#fff, #fff) 9px 0 / 2px 100% no-repeat;
}

.tree li:last-child {
  background-size: 2px 19px;
}

.tree li.root {
  margin-left: 1px;
  background: none;
}

.tree .root > ul > li {
  margin-left: 0;
}

.tree ul ul {
  margin-top: -1px;
}

.node {
  height: 38px;
  display: flex;
  align-items: center;
}

.node svg {
  flex: none;
  width: 30px;
  height: 30px;
  margin-right: 4px;
}

.dash {
  flex: none;
  width: 27px;
  height: 20px;
  background: linear-gradient(#fff, #fff) 9px 9px / 16px 2px no-repeat;
}

.plus,
.minus {
  background:
    linear-gradient(#000, #000) 4px 9px / 12px 3px no-repeat,
    radial-gradient(circle 9px at 10px 10px, #c8c8c8 0, #a2a2a2 60%, #666 90%, transparent 100%),
    linear-gradient(#fff, #fff) 9px 9px / 16px 2px no-repeat;
}

.plus {
  background:
    linear-gradient(#000, #000) 4px 9px / 12px 3px no-repeat,
    linear-gradient(#000, #000) 9px 4px / 3px 12px no-repeat,
    radial-gradient(circle 9px at 10px 10px, #c8c8c8 0, #a2a2a2 60%, #666 90%, transparent 100%),
    linear-gradient(#fff, #fff) 9px 9px / 16px 2px no-repeat;
}

.label {
  height: 28px;
  line-height: 29px;
  padding: 0 1px;
  white-space: pre;
  border-radius: 2px;
  background: #333366;
}

.label.long {
  flex: 1;
  min-width: 0;
  overflow: hidden;
}

.label.current {
  text-decoration: underline;
  text-underline-offset: 3px;
}

.cube-letter {
  font: bold 18px "Liberation Sans", sans-serif;
  fill: #d8cc80;
  stroke: #222;
}

/* definition dialog */
.dialog {
  position: absolute;
  left: 285px;
  top: 118px;
  width: 298px;
  padding: 0 6px 6px;
  border: 1px solid #101420;
  border-radius: 8px;
  background: linear-gradient(#6b7590 0, #7f8ba6 100px, #a9b4c4 200px, #2f3f63 212px, #3c5078 60%, #5f7ba6 90%, #7c9ac4 100%);
  box-shadow: inset 0 0 0 1px #c4cede, 0 3px 9px 3px rgba(0, 0, 0, .75);
}

.dialog-title {
  height: 28px;
  margin: 1px 0 0;
  display: flex;
  align-items: flex-start;
  background: radial-gradient(ellipse 60px 22px at 36px 12px, #b9bdc8 40%, rgba(160, 166, 182, 0)), linear-gradient(90deg, #8990a4, #384668 45%, #3d4a6c 75%, #7e879e);
}

.dialog-title span {
  flex: 1;
  line-height: 25px;
}

.dialog-title button {
  height: 19px;
  border: 1px solid #dde;
  border-top: none;
  color: #fff;
  font-weight: bold;
  line-height: 16px;
}

.help {
  width: 28px;
  border-radius: 0 0 0 4px;
  background: linear-gradient(#a7adbb, #6d7790 50%, #4b5674 50%, #69738f);
}

.quit {
  width: 48px;
  font-size: 20px;
  border-radius: 0 0 4px;
  background: linear-gradient(#dd9a90, #c65345 50%, #a8200f 50%, #c8402a);
}

.dialog-body {
  border: 1px solid #2b3448;
  background: #f0f0f0;
}

section {
  padding-bottom: 8px;
  border-top: 1px solid #a4a4a4;
  box-shadow: inset 0 1px #fff;
}

.intro {
  height: 42px;
  padding-top: 9px;
  border-top: none;
}

h2 {
  margin: 0;
  padding-left: 10px;
  height: 27px;
  line-height: 25px;
  font-size: 16px;
  font-weight: 500;
  color: #4c4c4c;
}

.row {
  height: 24px;
  display: flex;
  align-items: center;
}

.row.tight {
  height: 21px;
}

.name {
  width: 112px;
  margin-right: 6px;
  text-align: right;
  white-space: nowrap;
}

.row input[type="text"] {
  width: 104px;
  height: 18px;
  padding: 0 2px;
  border: 1px solid #7d828a;
  background: #fff;
}

.row input.plain {
  border-color: #d8d8d8;
  border-top-color: #aaa;
}

.row input.selected {
  color: #fff;
  background: #3399ff;
  box-shadow: inset 0 0 0 1px #fff;
}

.row select {
  width: 105px;
  height: 21px;
  padding-left: 2px;
}

.row select.wide {
  width: 128px;
}

.icon-btn {
  width: 22px;
  height: 22px;
  margin-left: 1px;
  border: 1px solid;
  border-color: #fff #777 #777 #fff;
  border-width: 1px 2px 2px 1px;
}

.icon-btn svg {
  width: 19px;
  height: 19px;
}

.spin {
  width: 103px;
  height: 18px;
  display: flex;
  border: 1px solid #fff;
  border-top: 2px solid #777;
  border-left: 2px solid #777;
  background: #fff;
}

.row .spin input {
  flex: 1;
  width: 0;
  height: 15px;
  padding: 0 1px;
  border: none;
  font-size: 11px;
}

.arrows {
  width: 16px;
  display: flex;
  flex-direction: column;
}

.arrows button {
  flex: 1;
  border: 1px solid #777;
  background: #dcdce0 url("data:image/svg+xml,%3Csvg xmlns='http://www.w3.org/2000/svg' width='8' height='4'%3E%3Cpath d='M0 4H8L4 0Z'/%3E%3C/svg%3E") center no-repeat;
}

.arrows .down {
  background-image: url("data:image/svg+xml,%3Csvg xmlns='http://www.w3.org/2000/svg' width='8' height='4'%3E%3Cpath d='M0 0H8L4 4Z'/%3E%3C/svg%3E");
}

.pick {
  width: 30px;
  display: flex;
  align-items: center;
  gap: 5px;
  font-size: 11px;
  color: #223;
}

.pick.far {
  width: 38px;
  gap: 6px;
}

input[type="radio"],
input[type="checkbox"] {
  appearance: none;
  flex: none;
  width: 12px;
  height: 12px;
  border: 1px solid #444;
  background: #ffffe0;
}

input[type="radio"] {
  border-radius: 50%;
}

input[type="radio"]:checked {
  border-color: #b8a070;
  background: radial-gradient(circle at 4px 4px, #cfe0ff 0, #2a5cb0 30%, #0c2a70 80%);
}

.check {
  display: inline-flex;
  align-items: center;
  gap: 5px;
  margin-right: 6px;
}

.signs,
.flips {
  display: flex;
  gap: 1px;
}

.signs {
  margin-left: 9px;
}

.push {
  height: 18px;
  border: 2px solid;
  border-color: #f4f4ff #8c8ca4 #8c8ca4 #f4f4ff;
  background: #cfcfe8;
  line-height: 14px;
}

.signs .push {
  width: 25px;
}

.flips .push {
  width: 48px;
}

.actions {
  height: 44px;
  padding: 7px 0 0;
  display: flex;
  justify-content: center;
}

.icon-btn.big {
  width: 28px;
  height: 28px;
  margin: 0;
}

.icon-btn.big svg {
  width: 25px;
  height: 25px;
}

.footer {
  height: 48px;
  padding: 18px 7px 0 0;
  display: flex;
  justify-content: flex-end;
  gap: 7px;
}

.footer .push {
  width: 54px;
  height: 21px;
  display: flex;
  align-items: center;
  justify-content: center;
  gap: 3px;
}

.footer .ok {
  color: #9a9aaa;
  text-shadow: 1px 1px #fff;
}

.lamp {
  width: 12px;
  height: 12px;
  border-radius: 50%;
  background: radial-gradient(circle at 4px 4px, #d0ffd0 0, #18b018 30%, #0a5c0a 90%);
}

.lamp.red {
  background: radial-gradient(circle at 4px 4px, #ffd8d0 0, #e03828 30%, #7c0c08 90%);
}

.round-letter {
  font: bold 7px "Liberation Sans", sans-serif;
}

/* floating tool palettes */
.palette {
  position: absolute;
  padding: 0 4px 5px;
  border: 1px solid #1c2424;
  background: linear-gradient(90deg, #ccd9d7, #b3c5c2 60%, #c3d0ce);
  box-shadow: inset 0 0 0 1px #eef4f4, 0 2px 8px 3px rgba(0, 0, 0, .65);
}

.palette.dark {
  background: radial-gradient(ellipse 60px 18px at 34px 12px, rgba(170, 174, 188, .9) 30%, rgba(150, 156, 172, 0)), linear-gradient(90deg, #8f95a5, #454f6c 55%, #868ea2);
}

.palette.mixed {
  background: linear-gradient(90deg, #c4d2d0, #b4c4c4 45%, #7d869a 60%, #8f97a8);
}

.palette-title {
  height: 24px;
  display: flex;
  align-items: center;
  justify-content: space-between;
  padding-left: 2px;
}

.close {
  width: 18px;
  height: 18px;
  margin-top: 2px;
  border: 1px solid #6c3028;
  color: #fff;
  font-size: 14px;
  font-weight: bold;
  line-height: 15px;
  background: linear-gradient(#e8a497, #d8705c 50%, #c03c22 50%, #d86a4a);
  box-shadow: inset 0 0 0 1px rgba(255, 255, 255, .3);
}

.tools {
  height: 39px;
  display: flex;
  align-items: center;
  padding: 0 4px 0 6px;
  border: 1px solid #000;
  outline: 1px solid #fff;
  background: linear-gradient(#fff 0, #e2e2f2 8px, #cfcfe8 16px, #cbcbe2 26px, #a4a4bc 100%);
}

.more-tools {
  height: 40px;
}

.tools .grip {
  align-self: flex-start;
  margin: 4px 6px 0 0;
}

.tool {
  position: relative;
  width: 28px;
  height: 28px;
}

.tool.more {
  width: 30px;
}

.tool.more::after {
  content: "";
  position: absolute;
  right: 0;
  bottom: 0;
  border: 4px solid transparent;
  border-top-color: #000;
  border-bottom: none;
}

.tool svg {
  width: 26px;
  height: 26px;
  margin-left: 1px;
  fill: #cdcdcd;
  stroke: #2a2a2a;
}

.o {
  fill: #f2940f;
  stroke: #7a4206;
}

.ol {
  fill: none;
  stroke: #e07c08;
  stroke-width: 2;
}

.n {
  fill: none;
}

.tan {
  fill: none;
  stroke: #b06c20;
}

.bead-letter {
  font: bold 12px "Liberation Sans", sans-serif;
  fill: #000;
  stroke: none;
}

.p-draw { left: 599px; top: 4px; }
.p-trim { left: 603px; top: 81px; }
.p-fix { left: 859px; top: 78px; }
.p-trim-design { left: 605px; top: 159px; }
.p-place { left: 795px; top: 159px; }
.p-locate { left: 608px; top: 242px; }
.p-bead { left: 761px; top: 246px; }
.p-analyse { left: 612px; top: 322px; }
.p-plan { left: 815px; top: 325px; }
.p-fill { left: 617px; top: 406px; }
.p-pierce { left: 789px; top: 423px; }
.p-prepare { left: 884px; top: 427px; }
.p-datum { left: 611px; top: 504px; }
```
